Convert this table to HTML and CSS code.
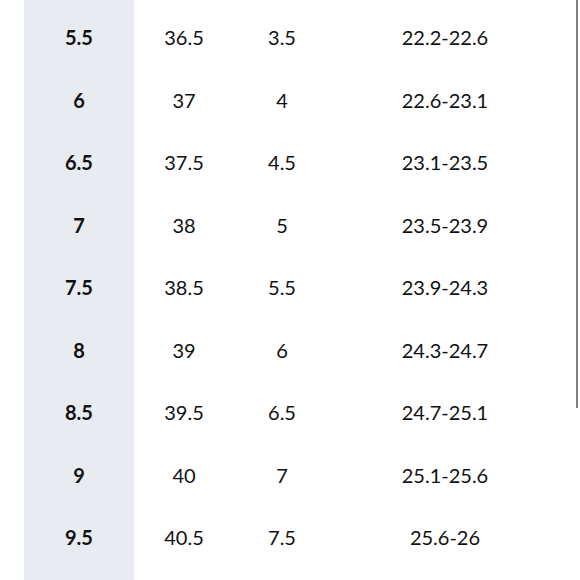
FILE: index.html
```html
<!DOCTYPE html>
<html>
<head>
<meta charset="utf-8">
<link rel="stylesheet" href="styles.css">
</head>
<body>
<div class="page">
  <div class="table">
    <div class="col col-us">
      <div class="cell">5.5</div><div class="cell">6</div><div class="cell">6.5</div><div class="cell">7</div><div class="cell">7.5</div><div class="cell">8</div><div class="cell">8.5</div><div class="cell">9</div><div class="cell">9.5</div>
    </div>
    <div class="col col-eu">
      <div class="cell">36.5</div><div class="cell">37</div><div class="cell">37.5</div><div class="cell">38</div><div class="cell">38.5</div><div class="cell">39</div><div class="cell">39.5</div><div class="cell">40</div><div class="cell">40.5</div>
    </div>
    <div class="col col-uk">
      <div class="cell">3.5</div><div class="cell">4</div><div class="cell">4.5</div><div class="cell">5</div><div class="cell">5.5</div><div class="cell">6</div><div class="cell">6.5</div><div class="cell">7</div><div class="cell">7.5</div>
    </div>
    <div class="col col-cm">
      <div class="cell">22.2-22.6</div><div class="cell">22.6-23.1</div><div class="cell">23.1-23.5</div><div class="cell">23.5-23.9</div><div class="cell">23.9-24.3</div><div class="cell">24.3-24.7</div><div class="cell">24.7-25.1</div><div class="cell">25.1-25.6</div><div class="cell">25.6-26</div>
    </div>
  </div>
  <div class="edge"><div class="edge-line"></div></div>
</div>
</body>
</html>
```

FILE: styles.css
```css
html, body {
  margin: 0;
  padding: 0;
  background: #ffffff;
}
.page {
  width: 580px;
  height: 580px;
  display: flex;
  padding-left: 24px;
  box-sizing: border-box;
  font-family: Lato, "Open Sans", sans-serif;
  font-size: 20px;
  color: #111111;
}
.table {
  display: flex;
  height: 580px;
}
.col {
  display: flex;
  flex-direction: column;
  padding-top: 6px;
  box-sizing: border-box;
  height: 580px;
}
.cell {
  height: 62.5px;
  display: flex;
  align-items: center;
  justify-content: center;
}
.col-us {
  width: 110px;
  background: #e8ebef;
  font-weight: 700;
}
.col-eu { width: 100px; }
.col-uk { width: 96px; }
.col-cm { width: 230px; }
.edge {
  width: 18px;
  display: flex;
  justify-content: flex-end;
}
.edge-line {
  width: 2px;
  height: 408px;
  background: #7f7f7f;
}
```
